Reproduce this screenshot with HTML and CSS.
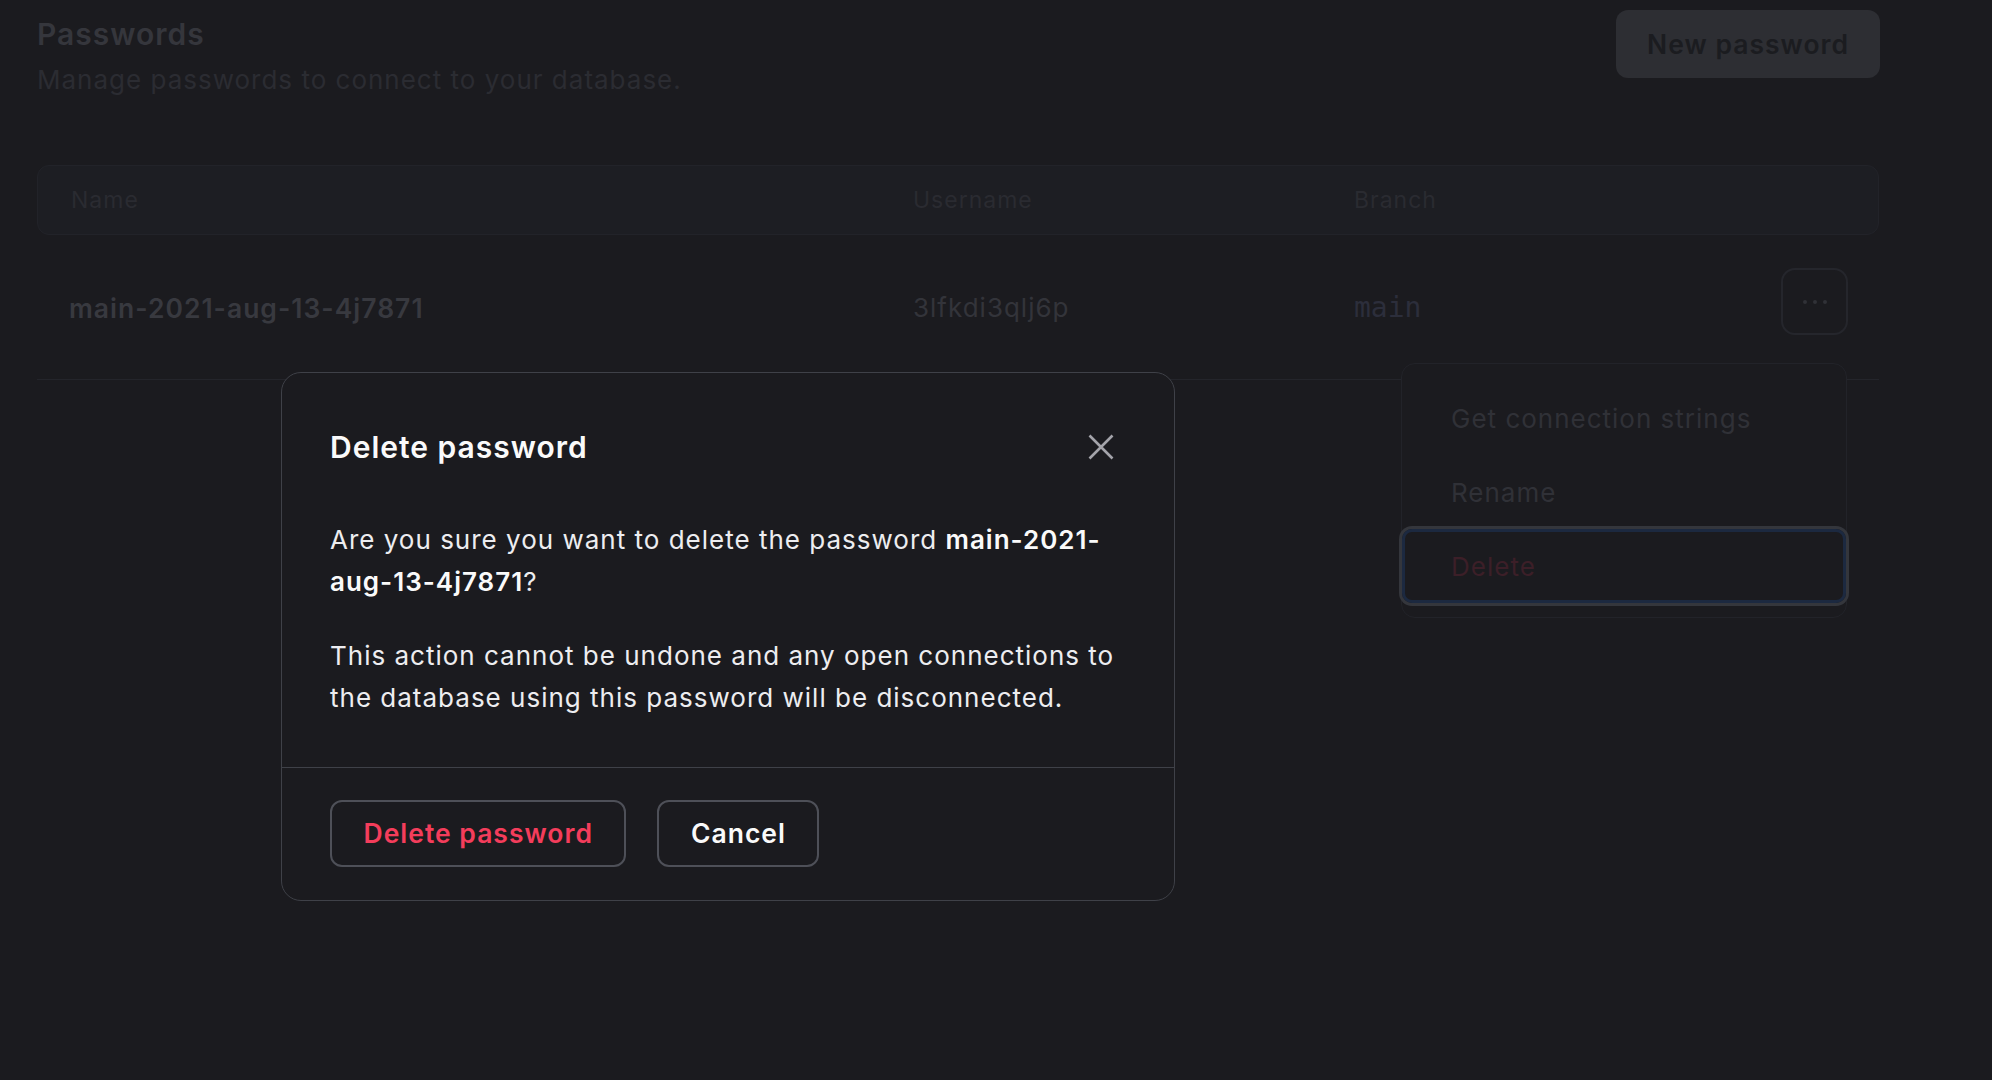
FILE: index.html
```html
<!DOCTYPE html>
<html lang="en">
<head>
<meta charset="utf-8">
<title>Passwords</title>
<link rel="stylesheet" href="styles.css">
</head>
<body>
<main class="page">
  <header class="page-header">
    <div class="page-heading">
      <h1 class="page-title">Passwords</h1>
      <p class="page-subtitle">Manage passwords to connect to your database.</p>
    </div>
    <button class="btn-new" type="button">New password</button>
  </header>

  <div class="table">
    <div class="table-head">
      <div class="th">Name</div>
      <div class="th">Username</div>
      <div class="th">Branch</div>
      <div class="th"></div>
    </div>
    <div class="table-row">
      <div class="td td-name">main-2021-aug-13-4j7871</div>
      <div class="td td-user">3lfkdi3qlj6p</div>
      <div class="td td-branch"><code class="mono">main</code></div>
      <div class="td-actions">
        <button class="btn-more" type="button" aria-label="More">
          <svg width="24" height="6" viewBox="0 0 24 6" aria-hidden="true"><circle cx="2" cy="3" r="2"/><circle cx="12" cy="3" r="2"/><circle cx="22" cy="3" r="2"/></svg>
        </button>
        <ul class="menu">
          <li class="menu-item">Get connection strings</li>
          <li class="menu-item">Rename</li>
          <li class="menu-item menu-item-danger is-focused">Delete</li>
        </ul>
      </div>
    </div>
  </div>
</main>

<div class="overlay">
  <section class="dialog" role="dialog" aria-labelledby="dlg-title">
    <div class="dialog-header">
      <h2 class="dialog-title" id="dlg-title">Delete password</h2>
      <button class="dialog-close" type="button" aria-label="Close">
        <svg width="26" height="26" viewBox="0 0 26 26" aria-hidden="true"><path d="M1.5 1.5 L24.5 24.5 M24.5 1.5 L1.5 24.5"/></svg>
      </button>
    </div>
    <div class="dialog-body">
      <p>Are you sure you want to delete the password <strong>main-2021-aug-13-4j7871</strong>?</p>
      <p>This action cannot be undone and any open connections to the database using this password will be disconnected.</p>
    </div>
    <div class="dialog-footer">
      <button class="btn btn-danger" type="button">Delete password</button>
      <button class="btn" type="button">Cancel</button>
    </div>
  </section>
</div>
</body>
</html>
```

FILE: styles.css
```css
* { box-sizing: border-box; }

html, body {
  margin: 0;
  background: #1b1b1f;
  font-family: Inter, "Noto Sans", "Liberation Sans", sans-serif;
  letter-spacing: 1px;
}

button { letter-spacing: 1px; }

.page {
  padding: 10px 113px 0 37px;
  min-height: 1080px;
}

/* header */
.page-header {
  display: flex;
  justify-content: space-between;
  align-items: flex-start;
}
.page-heading { padding-top: 4px; }
.page-title {
  margin: 0;
  font-size: 30px;
  line-height: 40px;
  font-weight: 600;
  color: #35363c;
}
.page-subtitle {
  margin: 8px 0 0;
  font-size: 26px;
  line-height: 36px;
  color: #2b2c32;
}
.btn-new {
  height: 68px;
  padding: 0 31px;
  border: 0;
  border-radius: 12px;
  background: #2d2e33;
  color: #1b1c20;
  font: 600 26.5px/1 Inter, sans-serif;
  margin-right: -1px;
}

/* table */
.table { margin-top: 67px; }
.table-head,
.table-row {
  display: grid;
  grid-template-columns: 842px 441px 1fr 67px;
}
.table-head {
  height: 70px;
  align-items: center;
  padding: 0 30px 0 33px;
  border: 1px solid #222329;
  border-radius: 12px;
  background: #1d1e23;
}
.th {
  font-size: 23px;
  color: #2a2b31;
}
.table-row {
  align-items: center;
  padding: 33px 31px 44px 34px;
  border-bottom: 1px solid #24252b;
}
.td {
  padding-top: 13px;
  font-size: 26px;
  line-height: 32px;
}
.td-name { font-weight: 600; font-size: 26.5px; color: #38393f; margin-left: -2px; }
.td-user { color: #33343a; }
.mono {
  font-family: "DejaVu Sans Mono", "Liberation Mono", monospace;
  font-size: 28px;
  letter-spacing: 0;
  color: #2c2e3b;
}

.td-actions { position: relative; }
.btn-more {
  display: flex;
  align-items: center;
  justify-content: center;
  width: 67px;
  height: 67px;
  padding: 0;
  background: transparent;
  border: 2px solid #25262c;
  border-radius: 14px;
}
.btn-more svg { fill: #303137; }

/* dropdown menu */
.menu {
  position: absolute;
  top: calc(100% + 28px);
  right: 1px;
  width: 446px;
  margin: 0;
  padding: 17px 0 14px;
  list-style: none;
  background: #1b1b1f;
  border: 1px solid #222329;
  border-radius: 14px;
}
.menu-item {
  height: 74px;
  display: flex;
  align-items: center;
  padding-left: 49px;
  font-size: 26px;
  color: #303137;
}
.menu-item-danger { color: #3c1f28; }
.menu-item.is-focused {
  border-radius: 10px;
  box-shadow: inset 0 0 0 3px #1c2940, 0 0 0 3px #34363c;
}

/* dialog */
.overlay {
  position: fixed;
  inset: 0;
  padding: 372px 0 0 281px;
}
.dialog {
  width: 894px;
  background: #1b1b1f;
  border: 1px solid #3f4148;
  border-radius: 20px;
  color: #ededf0;
}
.dialog-header {
  display: flex;
  justify-content: space-between;
  align-items: center;
  padding: 56px 56px 0 48px;
}
.dialog-title {
  margin: 0;
  font-size: 30px;
  line-height: 36px;
  font-weight: 600;
  color: #fafafa;
}
.dialog-close {
  display: flex;
  align-items: center;
  justify-content: center;
  width: 34px;
  height: 34px;
  padding: 0;
  border: 0;
  background: transparent;
}
.dialog-close svg path {
  stroke: #a4a4aa;
  stroke-width: 2.6;
  fill: none;
}
.dialog-body {
  padding: 54px 30px 48px 48px;
  font-size: 26px;
  line-height: 42px;
}
.dialog-body p { margin: 0; }
.dialog-body p + p { margin-top: 32px; }
.dialog-body strong { font-weight: 600; color: #fafafa; }

.dialog-footer {
  display: flex;
  gap: 31px;
  padding: 32px 48px 33px;
  border-top: 1px solid #3f4148;
}
.btn {
  height: 67px;
  padding: 0 31.5px;
  border: 2px solid #4e5058;
  border-radius: 12px;
  background: transparent;
  color: #fafafa;
  font: 600 26.5px/1 Inter, sans-serif;
}
.btn-danger { color: #f43d5b; }
```
